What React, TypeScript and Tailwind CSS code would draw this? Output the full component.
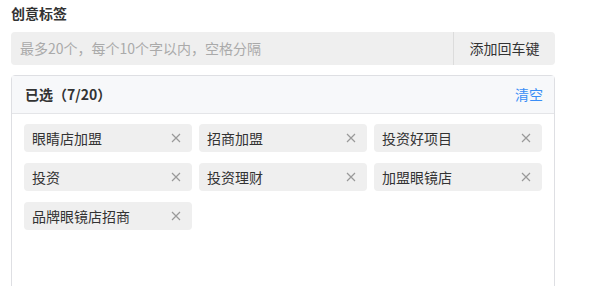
const tags = ['眼睛店加盟', '招商加盟', '投资好项目', '投资', '投资理财', '加盟眼镜店', '品牌眼镜店招商'];

export default function App() {
  return (
    <div
      className="w-[591px] h-[286px] overflow-hidden bg-white pl-[11px] pt-[2px] text-[#333]"
      style={{ fontFamily: '"Microsoft YaHei", "Noto Sans CJK SC", "Noto Sans", sans-serif' }}
    >
      <div className="h-[22px] leading-[22px] text-[14px] font-bold text-[#333]">创意标签</div>

      {/* input */}
      <div className="mt-[8px] flex h-[33px] w-[544px] rounded-[4px] bg-[#efefef]">
        <div className="flex flex-1 items-center pl-[9px] text-[14px] text-[#aaa]">
          最多20个，每个10个字以内，空格分隔
        </div>
        <div className="flex w-[102px] items-center justify-center border-l border-[#dcdcdc] text-[14px] text-[#333]">
          添加回车键
        </div>
      </div>

      {/* selected panel */}
      <div className="mt-[10px] h-[240px] w-[544px] rounded-t-[4px] border border-[#dedfe3]">
        <div className="flex h-[38px] items-center justify-between border-b border-[#e4e5e8] bg-[#f7f8fa] pl-[13px] pr-[11px]">
          <span className="text-[14px] font-bold text-[#333]">已选（7/20）</span>
          <span className="text-[14px] text-[#3a8ef6]">清空</span>
        </div>
        <div className="grid grid-cols-3 gap-x-[7px] gap-y-[11px] px-[12px] pt-[10px]">
          {tags.map((t) => (
            <div
              key={t}
              className="flex h-[28px] items-center justify-between rounded-[4px] bg-[#efefef] pl-[8px] pr-[11px]"
            >
              <span className="text-[14px] text-[#333]">{t}</span>
              <svg width="10" height="10" viewBox="0 0 10 10" className="text-[#999]">
                <path d="M1 1L9 9M9 1L1 9" stroke="currentColor" strokeWidth="1.2" />
              </svg>
            </div>
          ))}
        </div>
      </div>
    </div>
  );
}
